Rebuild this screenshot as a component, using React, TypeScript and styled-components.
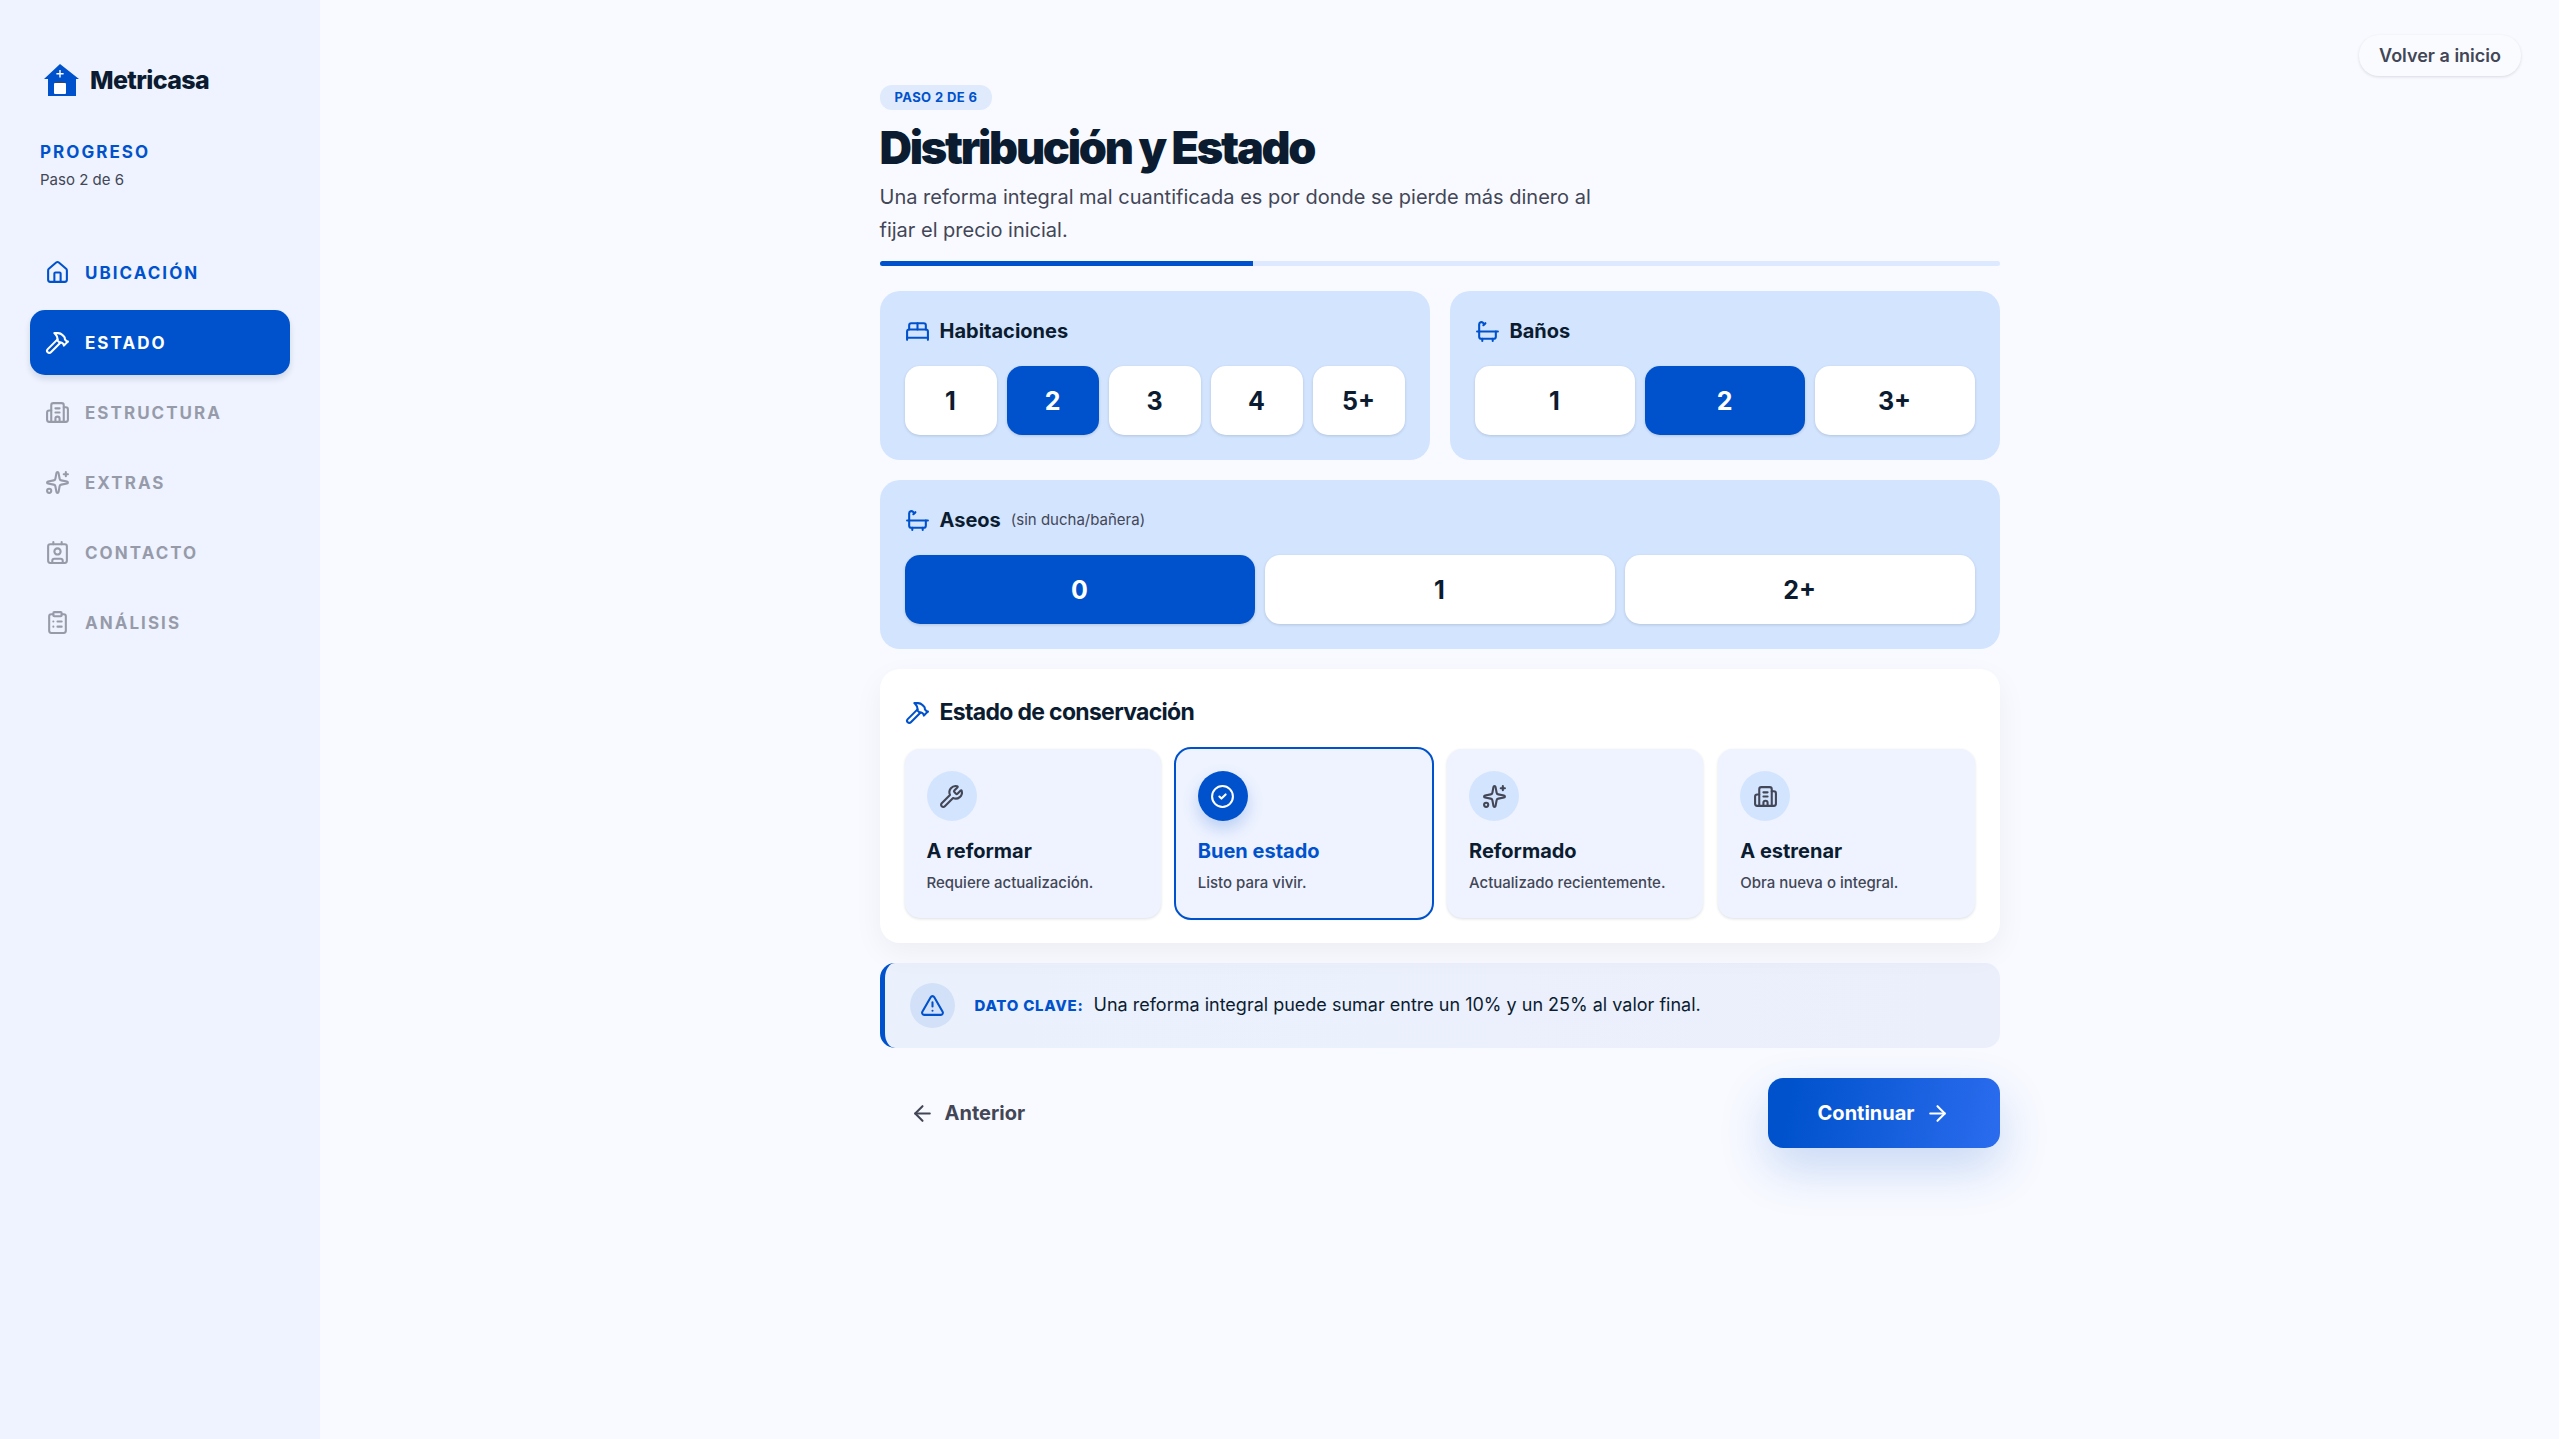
import React, { useState } from "react";
import styled, { createGlobalStyle, css } from "styled-components";
import {
  ArrowLeft,
  ArrowRight,
  Bath,
  BedDouble,
  Building2,
  CircleCheck,
  ClipboardList,
  Contact,
  Hammer,
  House,
  Sparkles,
  TriangleAlert,
  Wrench,
} from "lucide-react";

const color = {
  page: "#f8faff",
  sidebar: "#eef3ff",
  panel: "#d3e4fe",
  white: "#ffffff",
  ink: "#0b1c30",
  muted: "#424656",
  primary: "#0052cc",
  primaryLight: "#2b6cee",
};

const ICON = 25;

const GlobalStyle = createGlobalStyle`
  *, *::before, *::after { box-sizing: border-box; }
  body {
    margin: 0;
    background: ${color.page};
    color: ${color.ink};
    font-family: Inter, "Liberation Sans", sans-serif;
  }
  button { font-family: inherit; cursor: pointer; border: 0; }
  h1, h2, p { margin: 0; }
  svg { flex: none; display: block; }
`;

const Shell = styled.div`
  display: flex;
  min-height: 100vh;
`;

const Sidebar = styled.aside`
  flex: none;
  width: 320px;
  padding: 60px 30px;
  background: ${color.sidebar};
`;

const Brand = styled.div`
  display: flex;
  align-items: center;
  gap: 11px;
  height: 40px;
  padding: 0 14px;
  font-size: 25px;
  font-weight: 800;
  letter-spacing: -0.025em;
`;

const Progress = styled.div`
  padding: 40px 10px 0;
`;

const ProgressTitle = styled.p`
  font-size: 17px;
  line-height: 25px;
  font-weight: 700;
  letter-spacing: 0.12em;
  color: ${color.primary};
`;

const ProgressStep = styled.p`
  margin-top: 5px;
  font-size: 15px;
  line-height: 20px;
  color: ${color.muted};
`;

const Nav = styled.nav`
  display: flex;
  flex-direction: column;
  gap: 5px;
  margin-top: 50px;
`;

type StepState = "done" | "current" | "pending";

const NavItem = styled.button<{ $state: StepState }>`
  display: flex;
  align-items: center;
  gap: 15px;
  height: 65px;
  padding: 0 15px;
  border-radius: 15px;
  background: transparent;
  font-size: 17px;
  font-weight: 700;
  letter-spacing: 0.12em;
  text-transform: uppercase;
  color: ${color.primary};
  ${(p) =>
    p.$state === "current" &&
    css`
      background: ${color.primary};
      color: ${color.white};
      box-shadow: 0 4px 6px rgba(11, 28, 48, 0.12);
    `}
  ${(p) =>
    p.$state === "pending" &&
    css`
      color: ${color.muted};
      opacity: 0.5;
    `}
`;

const Main = styled.main`
  position: relative;
  flex: 1;
  padding: 85px 40px;
`;

const HomeButton = styled.button`
  position: absolute;
  top: 35px;
  right: 38px;
  height: 41px;
  padding: 0 20px;
  border-radius: 20px;
  background: #fafbff;
  color: ${color.muted};
  font-size: 18px;
  font-weight: 600;
  box-shadow: 0 1px 3px rgba(11, 28, 48, 0.14);
`;

const Content = styled.div`
  max-width: 1120px;
  margin: 0 auto;
`;

const Badge = styled.span`
  display: block;
  width: fit-content;
  padding: 0 15px;
  border-radius: 12px;
  background: #dfeafc;
  color: ${color.primary};
  font-size: 13px;
  line-height: 25px;
  font-weight: 700;
  letter-spacing: 0.03em;
`;

const Title = styled.h1`
  margin-top: 13px;
  font-size: 45px;
  line-height: 50px;
  font-weight: 900;
  letter-spacing: -0.05em;
`;

const Lead = styled.p`
  max-width: 720px;
  margin-top: 8px;
  font-size: 20px;
  line-height: 33px;
  color: ${color.muted};
`;

const Track = styled.div`
  height: 5px;
  margin-top: 14px;
  border-radius: 5px;
  overflow: hidden;
  background: #dce9ff;
`;

const TrackFill = styled.div`
  height: 100%;
  background: ${color.primary};
`;

const Panels = styled.div`
  display: grid;
  grid-template-columns: 1fr 1fr;
  gap: 20px;
  margin-top: 25px;
`;

const Panel = styled.section<{ $wide?: boolean; $raised?: boolean }>`
  padding: 25px;
  border-radius: 20px;
  background: ${color.panel};
  ${(p) => p.$wide && "grid-column: 1 / -1;"}
  ${(p) =>
    p.$raised &&
    css`
      background: ${color.white};
      box-shadow: 0 10px 30px rgba(11, 28, 48, 0.05);
    `}
`;

const PanelTitle = styled.h2<{ $large?: boolean }>`
  display: flex;
  align-items: center;
  gap: 10px;
  font-size: 20px;
  line-height: 30px;
  font-weight: 700;
  svg { color: ${color.primary}; }
  ${(p) =>
    p.$large &&
    css`
      font-size: 23px;
      line-height: 36px;
      letter-spacing: -0.03em;
    `}
`;

const Hint = styled.small`
  font-size: 15px;
  font-weight: 400;
  color: ${color.muted};
`;

const Options = styled.div`
  display: flex;
  gap: 10px;
  margin-top: 20px;
`;

const Option = styled.button<{ $on: boolean }>`
  flex: 1 1 0;
  height: 69px;
  padding: 0;
  border-radius: 15px;
  background: ${(p) => (p.$on ? color.primary : color.white)};
  color: ${(p) => (p.$on ? color.white : color.ink)};
  font-size: 25px;
  font-weight: 700;
  box-shadow: 0 1px 3px rgba(11, 28, 48, 0.16);
`;

const Choices = styled.div`
  display: grid;
  grid-template-columns: repeat(4, 1fr);
  gap: 15px;
  margin-top: 19px;
`;

const ChoiceIcon = styled.span<{ $on: boolean }>`
  display: grid;
  place-items: center;
  width: 50px;
  height: 50px;
  border-radius: 50%;
  background: ${(p) => (p.$on ? color.primary : color.panel)};
  color: ${(p) => (p.$on ? color.white : color.muted)};
  box-shadow: ${(p) => (p.$on ? "0 8px 16px rgba(0, 82, 204, 0.22)" : "none")};
`;

const ChoiceName = styled.span<{ $on: boolean }>`
  margin-top: 15px;
  font-size: 20px;
  line-height: 30px;
  font-weight: 700;
  color: ${(p) => (p.$on ? color.primary : color.ink)};
`;

const ChoiceText = styled.span`
  margin-top: 5px;
  font-size: 15px;
  line-height: 24px;
  font-weight: 500;
  color: ${color.muted};
`;

const Choice = styled.button<{ $on: boolean }>`
  display: flex;
  flex-direction: column;
  align-items: flex-start;
  padding: 22px 22px 23px;
  border-radius: 15px;
  background: ${color.sidebar};
  text-align: left;
  box-shadow: 0 1px 3px rgba(11, 28, 48, 0.14);
  ${(p) => p.$on && `outline: 2px solid ${color.primary};`}
`;

const KeyFact = styled.aside`
  display: flex;
  align-items: center;
  gap: 20px;
  min-height: 85px;
  margin-top: 20px;
  padding: 20px 25px;
  border-left: 5px solid ${color.primary};
  border-radius: 15px;
  background: linear-gradient(90deg, #eaf1fd, #ebeffb);
`;

const KeyFactIcon = styled.span`
  display: grid;
  place-items: center;
  flex: none;
  width: 45px;
  height: 45px;
  border-radius: 50%;
  background: #d3e1f8;
  color: ${color.primary};
`;

const KeyFactText = styled.p`
  display: flex;
  align-items: baseline;
  gap: 10px;
  font-size: 18px;
  line-height: 28px;
  strong {
    flex: none;
    font-size: 15px;
    font-weight: 800;
    letter-spacing: 0.05em;
    color: ${color.primary};
  }
`;

const Actions = styled.div`
  display: flex;
  justify-content: space-between;
  margin-top: 30px;
`;

const ActionButton = styled.button<{ $primary?: boolean }>`
  display: flex;
  align-items: center;
  gap: 10px;
  height: 70px;
  padding: 0 30px;
  border-radius: 15px;
  background: transparent;
  color: ${color.muted};
  font-size: 20px;
  font-weight: 700;
  ${(p) =>
    p.$primary &&
    css`
      padding: 0 50px;
      background: linear-gradient(100deg, ${color.primary} 10%, ${color.primaryLight});
      color: ${color.white};
      box-shadow: 0 20px 50px rgba(0, 82, 204, 0.2);
    `}
`;

const BrandMark = () => (
  <svg width="35" height="32" viewBox="0 0 35 32" aria-hidden="true">
    <path d="M16 0 L35 15 H32 V32 H4 V15 H0 Z" fill={color.primary} />
    <path d="M10 19 Q16 16 22 19 V30 H10 Z" fill={color.muted} />
    <rect x="10" y="19" width="12" height="11" rx="1" fill={color.white} />
    <path d="M16 6 V13.4 M12.4 9.7 H19.6" stroke={color.white} strokeWidth="1.4" />
  </svg>
);

const steps: { label: string; Icon: typeof House; state: StepState }[] = [
  { label: "Ubicación", Icon: House, state: "done" },
  { label: "Estado", Icon: Hammer, state: "current" },
  { label: "Estructura", Icon: Building2, state: "pending" },
  { label: "Extras", Icon: Sparkles, state: "pending" },
  { label: "Contacto", Icon: Contact, state: "pending" },
  { label: "Análisis", Icon: ClipboardList, state: "pending" },
];

const conditions = [
  { name: "A reformar", text: "Requiere actualización.", Icon: Wrench },
  { name: "Buen estado", text: "Listo para vivir.", Icon: CircleCheck },
  { name: "Reformado", text: "Actualizado recientemente.", Icon: Sparkles },
  { name: "A estrenar", text: "Obra nueva o integral.", Icon: Building2 },
];

interface CounterProps {
  title: string;
  hint?: string;
  Icon: typeof House;
  values: string[];
  initial: string;
  wide?: boolean;
}

function Counter({ title, hint, Icon, values, initial, wide }: CounterProps) {
  const [value, setValue] = useState(initial);
  return (
    <Panel $wide={wide}>
      <PanelTitle>
        <Icon size={ICON} />
        {title}
        {hint && <Hint>{hint}</Hint>}
      </PanelTitle>
      <Options role="group" aria-label={title}>
        {values.map((v) => (
          <Option key={v} type="button" $on={v === value} aria-pressed={v === value} onClick={() => setValue(v)}>
            {v}
          </Option>
        ))}
      </Options>
    </Panel>
  );
}

export default function App() {
  const [condition, setCondition] = useState("Buen estado");
  const step = 2;
  return (
    <>
      <GlobalStyle />
      <Shell>
        <Sidebar>
          <Brand>
            <BrandMark />
            Metricasa
          </Brand>
          <Progress>
            <ProgressTitle>PROGRESO</ProgressTitle>
            <ProgressStep>Paso 2 de 6</ProgressStep>
          </Progress>
          <Nav>
            {steps.map(({ label, Icon, state }) => (
              <NavItem key={label} type="button" $state={state} aria-current={state === "current" ? "step" : undefined}>
                <Icon size={ICON} />
                {label}
              </NavItem>
            ))}
          </Nav>
        </Sidebar>
        <Main>
          <HomeButton type="button">Volver a inicio</HomeButton>
          <Content>
            <Badge>PASO 2 DE 6</Badge>
            <Title>Distribución y Estado</Title>
            <Lead>Una reforma integral mal cuantificada es por donde se pierde más dinero al fijar el precio inicial.</Lead>
            <Track>
              <TrackFill style={{ width: `${(step / 6) * 100}%` }} />
            </Track>
            <Panels>
              <Counter title="Habitaciones" Icon={BedDouble} values={["1", "2", "3", "4", "5+"]} initial="2" />
              <Counter title="Baños" Icon={Bath} values={["1", "2", "3+"]} initial="2" />
              <Counter title="Aseos" hint="(sin ducha/bañera)" Icon={Bath} values={["0", "1", "2+"]} initial="0" wide />
              <Panel $wide $raised>
                <PanelTitle $large>
                  <Hammer size={ICON} />
                  Estado de conservación
                </PanelTitle>
                <Choices role="group" aria-label="Estado de conservación">
                  {conditions.map(({ name, text, Icon }) => {
                    const on = name === condition;
                    return (
                      <Choice key={name} type="button" $on={on} aria-pressed={on} onClick={() => setCondition(name)}>
                        <ChoiceIcon $on={on}>
                          <Icon size={ICON} />
                        </ChoiceIcon>
                        <ChoiceName $on={on}>{name}</ChoiceName>
                        <ChoiceText>{text}</ChoiceText>
                      </Choice>
                    );
                  })}
                </Choices>
              </Panel>
            </Panels>
            <KeyFact>
              <KeyFactIcon>
                <TriangleAlert size={ICON} />
              </KeyFactIcon>
              <KeyFactText>
                <strong>DATO CLAVE:</strong>
                <span>Una reforma integral puede sumar entre un 10% y un 25% al valor final.</span>
              </KeyFactText>
            </KeyFact>
            <Actions>
              <ActionButton type="button">
                <ArrowLeft size={ICON} />
                Anterior
              </ActionButton>
              <ActionButton type="button" $primary>
                Continuar
                <ArrowRight size={ICON} />
              </ActionButton>
            </Actions>
          </Content>
        </Main>
      </Shell>
    </>
  );
}
